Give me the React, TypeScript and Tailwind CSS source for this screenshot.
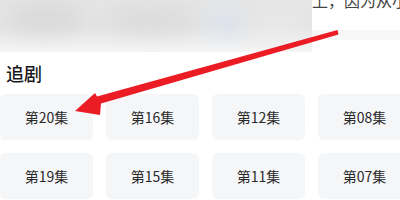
import React from 'react';

const episodes = ['第20集', '第16集', '第12集', '第08集', '第19集', '第15集', '第11集', '第07集'];

export default function App() {
  return (
    <div
      className="relative w-[400px] h-[200px] overflow-hidden bg-white"
      style={{ fontFamily: '"Noto Sans CJK SC", "Noto Sans", sans-serif' }}
    >
      {/* blurred top strip */}
      <div className="flex h-[52px]">
        <div className="relative shrink-0 w-[312px] h-full overflow-hidden bg-gradient-to-b from-[#e6e6e6] via-[#e4e4e4] to-[#f6f6f6]">
          <div className="absolute left-[10px] top-[6px] w-[70px] h-[24px] rounded-full bg-[#d6d6d6] blur-md" />
          <div className="absolute left-[110px] top-[8px] w-[80px] h-[22px] rounded-full bg-[#d9d9d9] blur-md" />
          <div className="absolute left-[212px] top-[12px] w-[28px] h-[22px] rounded-full bg-[#d8e4f6] blur-md" />
          <div className="absolute left-[250px] top-[20px] w-[50px] h-[16px] rounded-full bg-[#eeeeee] blur-md" />
        </div>
        <div className="flex-1 min-w-0 overflow-hidden flex flex-col">
          <div className="mt-[-8px] text-[16px] leading-[16px] text-[#444] whitespace-nowrap">上，因为从小就</div>
          <div className="mt-[22px] h-[10px] bg-[#f8f8f8]" />
        </div>
      </div>

      <div className="pl-[6px] pt-[8px] text-[18px] leading-[26px] font-medium text-[#1a1a1a]">追剧</div>

      <div className="mt-[8px] grid grid-cols-[repeat(4,93px)] gap-x-[13px] gap-y-[13px]">
        {episodes.map((e) => (
          <div
            key={e}
            className="h-[46px] rounded-[6px] bg-[#f5f6f8] flex items-center justify-center text-[14px] text-[#2a2a2a]"
          >
            {e}
          </div>
        ))}
      </div>

      {/* red annotation arrow */}
      <svg className="absolute left-0 top-0 pointer-events-none" width="400" height="200" viewBox="0 0 400 200">
        <polygon
          fill="#ec1c24"
          points="337.5,30 338.5,34.5 101,103.5 100,115 75,111 95,93 97,96.5"
        />
      </svg>
    </div>
  );
}
